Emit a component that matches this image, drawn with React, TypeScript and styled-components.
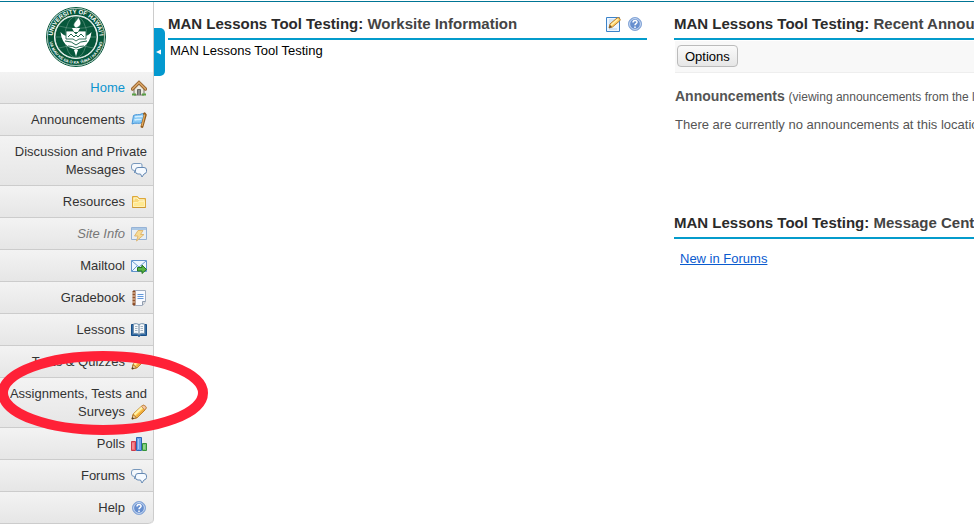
import React from "react";
import styled, { createGlobalStyle, css } from "styled-components";

const GlobalStyle = createGlobalStyle`
  * { box-sizing: border-box; }
  html { overflow: hidden; }
  body {
    margin: 0;
    background: #fff;
    color: #000;
    font-family: "Liberation Sans", Helvetica, Arial, sans-serif;
    font-size: 13px;
    line-height: 18px;
  }
`;

const Page = styled.div`
  padding-top: 1px;
  min-height: 100vh;
  overflow: hidden;
`;

const Portal = styled.div`
  display: flex;
  align-items: flex-start;
  border-top: 1px solid #007595;
`;

const Sidebar = styled.nav`
  position: relative;
  flex: 0 0 154px;
  border-right: 1px solid #ccc;
  border-bottom-right-radius: 5px;
`;

const LogoLink = styled.a`
  display: flex;
  justify-content: center;
  padding: 5px 2px 5px 0;
  height: 70px;
`;

const Menu = styled.ul`
  list-style: none;
  margin: 0;
  padding: 0;
`;

const MenuItem = styled.li`
  position: relative;
  border-bottom: 1px solid #ccc;
  background: linear-gradient(#f3f3f3, #e6e6e6);
  &:last-child { border-bottom-right-radius: 5px; }
`;

const MenuLink = styled.a<{ $state?: "current" | "hidden" }>`
  display: flex;
  flex-direction: column;
  padding: 7px 6px 6px 0;
  color: #333;
  text-decoration: none;
  text-align: right;
  white-space: nowrap;
  ${(p) => p.$state === "current" && css`color: #0d94cf;`}
  ${(p) => p.$state === "hidden" && css`color: #777; font-style: italic; svg { opacity: 0.6; }`}
`;

const LabelRow = styled.span`
  display: flex;
  justify-content: flex-end;
  gap: 6px;
  height: 18px;
  svg { margin-top: 1px; flex: none; }
`;

const Collapse = styled.button`
  position: absolute;
  top: 26px;
  left: 154px;
  z-index: 1;
  display: flex;
  align-items: center;
  width: 11px;
  height: 48px;
  padding: 0 0 0 2px;
  border: 0;
  border-radius: 0 5px 5px 0;
  background: #0499cf;
`;

const Highlight = styled.svg`
  position: absolute;
  top: -28px;
  left: -3px;
  z-index: 2;
  pointer-events: none;
`;

const Columns = styled.main`
  flex: 1;
  min-width: 0;
  display: grid;
  grid-template-columns: repeat(2, minmax(479px, 1fr));
  gap: 27px;
  padding: 10px 14px;
`;

const Column = styled.div`
  display: flex;
  flex-direction: column;
  gap: 77px;
`;

const Tool = styled.section`
  white-space: nowrap;
`;

const TitleBar = styled.header`
  display: flex;
  justify-content: space-between;
  height: 28px;
  border-bottom: 2px solid #049bcb;
`;

const Title = styled.h2`
  margin: 0;
  font-size: 15px;
  line-height: 23px;
  color: #444;
  span { color: #2b2b2b; }
`;

const Actions = styled.div`
  display: flex;
  gap: 6px;
  padding: 4px 4px 0 0;
`;

const IconButton = styled.button`
  display: flex;
  width: 16px;
  height: 16px;
  padding: 0;
  border: 0;
  background: none;
`;

const Body = styled.p`
  margin: 0;
  padding: 2px;
`;

const Toolbar = styled.div`
  margin: 1px 0 0 1px;
  padding: 4px 2px;
  height: 32px;
  background: #f8f8f8;
  border-bottom: 1px solid #eee;
`;

const OptionsButton = styled.button`
  display: block;
  height: 22px;
  padding: 0 7px;
  border: 1px solid #bbb;
  border-radius: 4px;
  background: linear-gradient(#fafafa, #e6e6e6);
  color: #000;
  font: 13px "Liberation Sans", Helvetica, Arial, sans-serif;
`;

const Announcements = styled.div`
  padding: 14px 0 0 1px;
  color: #555;
`;

const Subheading = styled.h3`
  margin: 0 0 10px;
  font-size: 14px;
  line-height: 18px;
  small { font-size: 12px; font-weight: normal; }
`;

const Text = styled.p`
  margin: 0;
`;

const ForumLinks = styled.div`
  padding: 11px 6px;
  a { color: #0a5bcf; }
`;

const icons = {
  home: (
    <>
      <path d="M3 8v7h10V8L8 3z" fill="#ece9df" stroke="#78776c" />
      <path d="M6.500 15V9.500h3V15" fill="#8b8c88" stroke="#686a65" />
      <path d="M1.500 9 8 2.500 14.500 9" fill="none" stroke="#91602d" strokeWidth="3.200" strokeLinecap="round" />
      <path d="M1.500 9 8 2.500 14.500 9" fill="none" stroke="#d8a365" strokeWidth="1.700" strokeLinecap="round" />
      <path d="M1 14.500h4M11 14.500h4" stroke="#58a044" strokeWidth="2" />
    </>
  ),
  flag: (
    <>
      <path d="M2.500 3.500c3-2 5 .500 9-2l2 1-2.500 8c-3 2-6-.500-10 1.500z" fill="#86c8f5" stroke="#4795d8" />
      <path d="M4 5c3-1.500 5 .500 7.500-1M3.500 8c2.500-1.500 5 .500 7-1" fill="none" stroke="#d3eeff" strokeWidth="1.500" />
      <path d="M13.500 1.800 14.300 3 11 14.500" fill="none" stroke="#925b1c" strokeWidth="2.800" strokeLinecap="round" />
      <path d="M13.800 2.500 11 14" stroke="#e5ad60" strokeWidth="1.200" />
    </>
  ),
  chat: (
    <>
      <path d="M3 1.500h6.500Q11 1.500 11 3v3.500Q11 8.500 9 8.500H6L3.500 11V8.500Q.500 8.500.500 6V4Q.500 1.500 3 1.500z" fill="#f4f8fc" stroke="#7898bc" />
      <path d="M7 5.500h6q2.500 0 2.500 2.500v1.500q0 2-2.500 2.500l-2 3-1.500-3H7Q4.500 12 4.500 9.500V8Q4.500 5.500 7 5.500z" fill="#f5faff" stroke="#6589b3" />
    </>
  ),
  folder: (
    <>
      <path d="M1.500 13.500v-11h5l1.500 2h6.500v9z" fill="#f8d879" stroke="#dda83b" />
      <path d="M3 6.500V4h3l2 2h5v2" fill="none" stroke="#fff7d1" />
      <path d="M2.500 12.500v-4h4l1.500-1h5.500v5z" fill="#ffe991" stroke="#fff1b7" />
      <path d="M1.500 13.500h13" stroke="#cc9832" />
    </>
  ),
  site: (
    <>
      <path d="M.500 1.500h15v12H.500z" fill="#e7f1fb" stroke="#5d8cc6" />
      <path d="M1 2h14v2H1z" fill="#80afe0" />
      <path d="M7 4.500 3.500 10H7l-1.500 5L13 8.500H9.500l2.500-4z" fill="#ffd05a" stroke="#d89625" />
    </>
  ),
  mail: (
    <>
      <path d="M.500 2.500h15v11H.500z" fill="#edf6ff" stroke="#6193cc" />
      <path d="m1 3 7 6 7-6M1 13l5-5M15 13l-5-5" fill="none" stroke="#6b9bd0" />
      <path d="M6.500 9.500H11V7l4.500 4.500L11 15.500V13H6.500z" fill="#58b345" stroke="#26791f" />
    </>
  ),
  notebook: (
    <>
      <path d="M3.500.500h11v11l-3 4h-8z" fill="#f8faff" stroke="#a1adc0" />
      <path d="M2 1h2v14H2z" fill="#a76132" stroke="#7e4525" />
      <path d="M1 3h3M1 6h3M1 9h3M1 12h3" stroke="#f0d4b8" />
      <path d="M6.500 4.500h6M6.500 6.500h6M6.500 8.500h6" stroke="#6298db" />
      <path d="M11.500 15v-3.500h3" fill="#ddd" stroke="#929eaf" />
    </>
  ),
  book: (
    <>
      <path d="M.500 2.500h15v11h-6L8 14.500l-1.500-1h-6z" fill="#356ca6" stroke="#174f87" />
      <path d="M2.500 2q3-1 5.500.500Q10.500 1 13.500 2v9.500q-3-1-5.500 1-2.500-2-5.500-1z" fill="#f5f9fc" stroke="#7391ac" />
      <path d="M8 3v10" stroke="#66809a" />
      <path d="M4 4.500h2.500M4 6.500h2.500M4 8.500h2.500M9.500 4.500H12M9.500 6.500H12M9.500 8.500H12" stroke="#a5b3c0" />
    </>
  ),
  pencil: (
    <>
      <path d="m1 15 1.200-5L11 1.800q1.700-1.300 3.300.200t.200 3.500L6 13.800z" fill="#ffcc54" stroke="#b97920" />
      <path d="m3.500 10.500 8-7.500" stroke="#fff3ac" strokeWidth="2.200" />
      <path d="m5.500 12.500 8-7.500" stroke="#eda83a" strokeWidth="1.400" />
      <path d="m10.500 2.500 3.300 3.500.700-.700q1.400-1.800-.200-3.300-1.600-1.300-3.100-.100z" fill="#f5c6a4" stroke="#c69054" />
      <path d="m1 15 1.200-4.200L5.500 13.600z" fill="#f6dbaa" stroke="#aa712d" />
      <path d="m.700 15.300.800-2.300 1.700 1.500z" fill="#443f37" />
    </>
  ),
  chart: (
    <>
      <path d="M.500 5.500h4v9h-4z" fill="#ee6b75" stroke="#cd3949" />
      <path d="M5.500 1.500h5v13h-5z" fill="#6da2e9" stroke="#2d66b5" />
      <path d="M11.500 7.500h4v7h-4z" fill="#74ca71" stroke="#35943b" />
      <path d="M2 7v6M7.500 3v10M13 9v4" stroke="#fff" opacity=".400" />
    </>
  ),
  help: (
    <>
      <circle cx="8" cy="8" r="6.500" fill="#678fcf" stroke="#88a8d8" />
      <circle cx="8" cy="8" r="5.400" fill="none" stroke="#d1e0f6" />
      <path d="M6 6.500c0-3 4.500-2.500 4 0-.200 1.200-2 1.100-2 2.800M8 10.500v1.500" fill="none" stroke="#fff" strokeWidth="1.500" />
    </>
  ),
  edit: (
    <>
      <path d="M1.500 1.500h13v14h-13z" fill="#edf6ff" stroke="#3c83c9" />
      <path d="M4 4h6M4 6h5M4 8h3M4 13h8" stroke="#b7d0e8" />
      <path d="m4 12 1-4 7-6q1.500-1 2.700.500T14.500 5l-7 6z" fill="#ffd064" stroke="#b77c2d" />
      <path d="m6 9 7-6" stroke="#fff2b7" strokeWidth="1.500" />
      <path d="m4 12 1-3 2 2z" fill="#655437" />
    </>
  ),
};

type IconName = keyof typeof icons;

const Icon = ({ name }: { name: IconName }) => (
  <svg width="16" height="16" viewBox="0 0 16 16" aria-hidden="true">{icons[name]}</svg>
);

const Seal = () => (
  <svg width="60" height="60" viewBox="0 0 60 60" role="img" aria-label="University of Hawaiʻi">
    <defs>
      <path id="seal-top" d="M7.500 36A23.300 23.300 0 1 1 52.500 36" />
      <path id="seal-bottom" d="M3.500 35A27 27 0 0 0 56.500 35" />
    </defs>
    <circle cx="30" cy="30" r="29.500" fill="#fff" stroke="#07573b" />
    <circle cx="30" cy="30" r="25.400" fill="none" stroke="#07573b" strokeWidth="6.800" />
    <circle cx="30" cy="30" r="28.500" fill="none" stroke="#fff" strokeWidth=".500" />
    <circle cx="30" cy="30" r="21" fill="#07573b" stroke="#e5eee9" strokeWidth=".800" />
    <g fill="none" stroke="#6d9c89" strokeWidth=".600">
      <ellipse cx="30" cy="30" rx="11" ry="20.500" />
      <path d="M30 9.500v41M9.500 30h41M13 19q17 5 34 0M13 41q17-5 34 0" />
    </g>
    <path d="M14.500 25q3 4 9 4.500L30 32l6.500-2.500q6-.500 9-4.500-1 10-8 15L30 43l-7.500-3Q15.500 35 14.500 25z" fill="#fff" />
    <path d="M19 34q7 0 11 4 4-4 11-4M22 39q5 0 8 2 3-2 8-2" fill="none" stroke="#07573b" strokeWidth=".900" />
    <path d="M20 24h7l3 3 3-3h7v8h-7l-3 2-3-2h-7z" fill="#fff" stroke="#07573b" strokeWidth=".800" />
    <path d="m22 30 3-3 3 3 2-2 2 2 3-3 3 3" fill="none" stroke="#07573b" strokeWidth=".900" />
    <path d="M26 21h8l-2 4h-4z" fill="#fff" />
    <path d="M30 21c-6-4 2-7 2-11 4 5 4 9-2 11z" fill="#fff" stroke="#07573b" strokeWidth=".500" />
    <path d="M28 43h4l-2 6z" fill="#fff" />
    <g fill="#fff" fontWeight="bold" textAnchor="middle">
      <text fontSize="6"><textPath href="#seal-top" startOffset="50%">UNIVERSITY OF HAWAIʻI</textPath></text>
      <text fontSize="4"><textPath href="#seal-bottom" startOffset="50%">UA MAU KE EA O KA ʻĀINA I KA PONO</textPath></text>
    </g>
  </svg>
);

interface Entry {
  lines: string[];
  icon: IconName;
  state?: "current" | "hidden";
  highlighted?: boolean;
}

const entries: Entry[] = [
  { lines: ["Home"], icon: "home", state: "current" },
  { lines: ["Announcements"], icon: "flag" },
  { lines: ["Discussion and Private", "Messages"], icon: "chat" },
  { lines: ["Resources"], icon: "folder" },
  { lines: ["Site Info"], icon: "site", state: "hidden" },
  { lines: ["Mailtool"], icon: "mail" },
  { lines: ["Gradebook"], icon: "notebook" },
  { lines: ["Lessons"], icon: "book" },
  { lines: ["Tests & Quizzes"], icon: "pencil" },
  { lines: ["Assignments, Tests and", "Surveys"], icon: "pencil", highlighted: true },
  { lines: ["Polls"], icon: "chart" },
  { lines: ["Forums"], icon: "chat" },
  { lines: ["Help"], icon: "help" },
];

const ToolTitle = ({ name }: { name: string }) => (
  <Title><span>MAN Lessons Tool Testing:</span> {name}</Title>
);

export default function App() {
  return (
    <Page>
      <GlobalStyle />
      <Portal>
        <Sidebar aria-label="Site tools">
          <LogoLink href="#"><Seal /></LogoLink>
          <Collapse aria-label="Collapse navigation">
            <svg width="5" height="6" viewBox="0 0 5 6"><path d="M5 .500v5L0 3z" fill="#fff" /></svg>
          </Collapse>
          <Menu>
            {entries.map(({ lines, icon, state, highlighted }) => (
              <MenuItem key={lines.join(" ")}>
                <MenuLink href="#" $state={state}>
                  {lines.slice(0, -1).map((line) => <span key={line}>{line}</span>)}
                  <LabelRow>{lines[lines.length - 1]}<Icon name={icon} /></LabelRow>
                </MenuLink>
                {highlighted && (
                  <Highlight width="212" height="86" viewBox="0 0 212 86" aria-hidden="true">
                    <ellipse cx="106" cy="43" rx="100" ry="37" fill="none" stroke="#ff2137" strokeWidth="10" />
                  </Highlight>
                )}
              </MenuItem>
            ))}
          </Menu>
        </Sidebar>
        <Columns>
          <Column>
            <Tool>
              <TitleBar>
                <ToolTitle name="Worksite Information" />
                <Actions>
                  <IconButton aria-label="Edit"><Icon name="edit" /></IconButton>
                  <IconButton aria-label="Help"><Icon name="help" /></IconButton>
                </Actions>
              </TitleBar>
              <Body>MAN Lessons Tool Testing</Body>
            </Tool>
          </Column>
          <Column>
            <Tool>
              <TitleBar><ToolTitle name="Recent Announcements" /></TitleBar>
              <Toolbar><OptionsButton>Options</OptionsButton></Toolbar>
              <Announcements>
                <Subheading>Announcements <small>(viewing announcements from the last 10 days)</small></Subheading>
                <Text>There are currently no announcements at this location.</Text>
              </Announcements>
            </Tool>
            <Tool>
              <TitleBar><ToolTitle name="Message Center Notifications" /></TitleBar>
              <ForumLinks><a href="#">New in Forums</a></ForumLinks>
            </Tool>
          </Column>
        </Columns>
      </Portal>
    </Page>
  );
}
